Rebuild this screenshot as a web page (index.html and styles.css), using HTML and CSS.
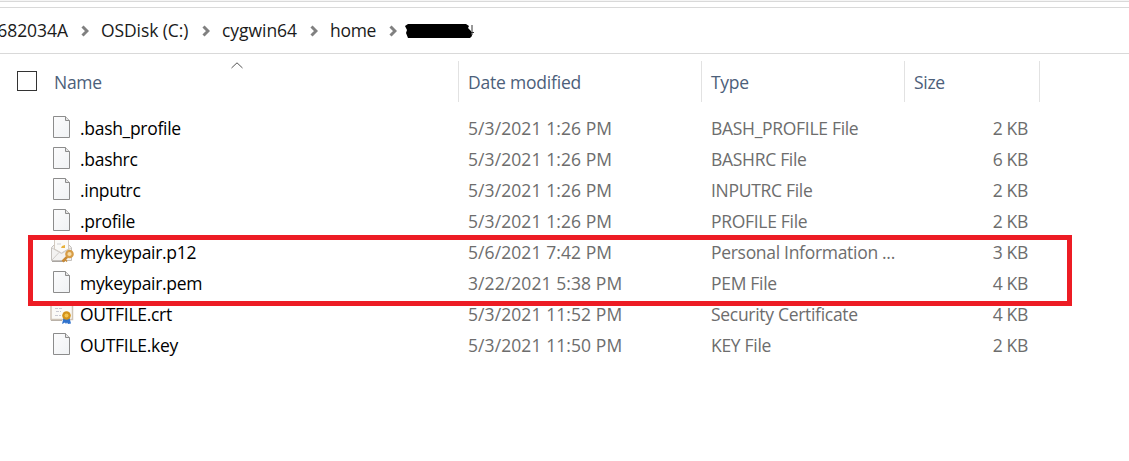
FILE: index.html
```html
<!DOCTYPE html>
<html lang="en">
<head>
  <meta charset="UTF-8">
  <title>home</title>
  <link rel="stylesheet" href="styles.css">
</head>
<body>
  <svg class="defs" width="0" height="0">
    <symbol id="chevron" viewBox="0 0 8 12">
      <path d="M1.5 1.5 L6 6 L1.5 10.5" fill="none" stroke="#808080" stroke-width="3"/>
    </symbol>
    <linearGradient id="paper" x1="0" y1="0" x2="1" y2="1">
      <stop offset="0" stop-color="#fcfcfd"/>
      <stop offset="1" stop-color="#f0f2f4"/>
    </linearGradient>
    <symbol id="file" viewBox="0 0 24 24">
      <path d="M3.5 1.5 H15.5 L19.5 5.5 V22.5 H3.5 Z" fill="url(#paper)" stroke="#8c8c8c"/>
      <path d="M15.5 1.5 V5.5 H19.5" fill="#e4e4e4" stroke="#8c8c8c"/>
    </symbol>
    <symbol id="pfx" viewBox="0 0 24 24">
      <path d="M1.5 8.5 L4 6 H19 L21.5 8.5 V21.5 H1.5 Z" fill="#f1f0ef" stroke="#c4c0bc"/>
      <path d="M4.5 0 H18.500 V10 L11.500 14 L4.500 10 Z" fill="#fbfaf8" stroke="#d3cac0"/>
      <path d="M7 5 H11" stroke="#cfcfd2"/>
      <path d="M11 9 L12 7 L15 6 V9 Z" fill="#e8b23c"/>
      <path d="M2 9 L11.500 14.500 L21 9 V21 H2 Z" fill="#f3f2f1"/>
      <path d="M2 9 L11.500 14.500 L21 9 M2 21 L9 13.500" fill="none" stroke="#cfcbc7"/>
      <path d="M2 22.500 H15" stroke="#aaa6a2"/>
      <path d="M18 17 L12.500 22.500" stroke="#c98a34" stroke-width="2.500"/>
      <path d="M14.500 20 l2.500 2.500" stroke="#c98a34" stroke-width="1.500"/>
      <circle cx="19.500" cy="15" r="3.200" fill="#f6dca8" stroke="#d79c45" stroke-width="2.200"/>
    </symbol>
    <symbol id="cert" viewBox="0 0 24 24">
      <rect x="1" y="2.500" width="21.500" height="16" fill="#fbfaf7" stroke="#cfc4b6" stroke-width="1.500"/>
      <path d="M5 7.500 H13 M6 10.500 H11 M5 14.500 H11" stroke="#c9c9d2" stroke-dasharray="3 1"/>
      <path d="M1 19.500 H12" stroke="#b9b1a8"/>
      <path d="M13.500 17 L12 23 L15 21.500 L16 23 L17 21.500 L18 23 L21 22.500 L19.500 17 Z" fill="#2f72cc"/>
      <circle cx="16.500" cy="14.500" r="4.300" fill="#d3921a"/>
      <circle cx="16.500" cy="14.500" r="2" fill="#f2c451"/>
    </symbol>
  </svg>

  <div class="toolbar-edge"></div>
  <nav class="address">
    <span class="crumb drive">682034A</span>
    <svg class="sep"><use href="#chevron"/></svg>
    <span class="crumb disk">OSDisk (C:)</span>
    <svg class="sep"><use href="#chevron"/></svg>
    <span class="crumb cygwin">cygwin64</span>
    <svg class="sep"><use href="#chevron"/></svg>
    <span class="crumb home">home</span>
    <svg class="sep"><use href="#chevron"/></svg>
    <svg class="redacted" viewBox="0 0 70 16">
      <path d="M68 2 V12 M66 9.500 H70" fill="none" stroke="#333"/>
      <path d="M1 3 L4 1 H62 L65 3 L64 5 L67 8 L68 13 L66 15 H4 L2 10 L3 7 Z"/>
    </svg>
  </nav>

  <div class="files">
    <div class="header">
      <div class="check"><span class="box"></span></div>
      <div class="col name">Name
        <svg class="sort" viewBox="0 0 12 7"><path d="M.5 6 L6 .8 L11.500 6" fill="none" stroke="#555"/></svg>
      </div>
      <div class="col date">Date modified</div>
      <div class="col type">Type</div>
      <div class="col size">Size</div>
    </div>

    <div class="row"><svg class="icon"><use href="#file"/></svg><span class="name">.bash_profile</span><span class="date">5/3/2021 1:26 PM</span><span class="type">BASH_PROFILE File</span><span class="size">2 KB</span></div>
    <div class="row"><svg class="icon"><use href="#file"/></svg><span class="name">.bashrc</span><span class="date">5/3/2021 1:26 PM</span><span class="type">BASHRC File</span><span class="size">6 KB</span></div>
    <div class="row"><svg class="icon"><use href="#file"/></svg><span class="name">.inputrc</span><span class="date">5/3/2021 1:26 PM</span><span class="type">INPUTRC File</span><span class="size">2 KB</span></div>
    <div class="row"><svg class="icon"><use href="#file"/></svg><span class="name">.profile</span><span class="date">5/3/2021 1:26 PM</span><span class="type">PROFILE File</span><span class="size">2 KB</span></div>
    <div class="row"><svg class="icon"><use href="#pfx"/></svg><span class="name">mykeypair.p12</span><span class="date">5/6/2021 7:42 PM</span><span class="type">Personal Information ...</span><span class="size">3 KB</span></div>
    <div class="row"><svg class="icon"><use href="#file"/></svg><span class="name">mykeypair.pem</span><span class="date">3/22/2021 5:38 PM</span><span class="type">PEM File</span><span class="size">4 KB</span></div>
    <div class="row"><svg class="icon"><use href="#cert"/></svg><span class="name">OUTFILE.crt</span><span class="date">5/3/2021 11:52 PM</span><span class="type">Security Certificate</span><span class="size">4 KB</span></div>
    <div class="row"><svg class="icon"><use href="#file"/></svg><span class="name">OUTFILE.key</span><span class="date">5/3/2021 11:50 PM</span><span class="type">KEY File</span><span class="size">2 KB</span></div>

    <div class="highlight"></div>
  </div>
</body>
</html>
```
FILE: styles.css
```css
* {
  box-sizing: border-box;
}

body {
  margin: 0;
  background: #fff;
  color: #000;
  font-family: "Open Sans", "Noto Sans", sans-serif;
  font-size: 17.5px;
  letter-spacing: -0.3px;
  overflow: hidden;
}

.defs {
  position: absolute;
}

.toolbar-edge {
  height: 2px;
  background: #f5f5f5;
  border-bottom: 1px solid #d9d9d9;
}

.address {
  display: flex;
  align-items: center;
  height: 47px;
  margin-top: 5px;
  border-top: 1px solid #d9d9d9;
  border-bottom: 1px solid #d9d9d9;
}

.crumb {
  flex: none;
  padding-bottom: 2px;
  line-height: 24px;
  color: #1a1a1a;
  white-space: nowrap;
}

.drive {
  display: flex;
  justify-content: flex-end;
  width: 68px;
  letter-spacing: -0.05px;
}

.disk {
  width: 88px;
  letter-spacing: -0.1px;
}

.cygwin {
  width: 75px;
  letter-spacing: -0.05px;
}

.home {
  width: 46px;
}

.sep {
  flex: none;
  width: 8px;
  height: 12px;
  margin: 1px 12px 0 13px;
}

.redacted {
  flex: none;
  width: 70px;
  height: 16px;
  margin-left: -5px;
}

.files {
  position: relative;
  padding-top: 7px;
}

.header {
  display: grid;
  grid-template-columns: 44px 415px 243px 203px 135px;
  grid-template-rows: 41px;
  margin-bottom: 11px;
  color: #4c607a;
  line-height: 43px;
}

.check {
  padding: 10px 0 0 17px;
}

.box {
  display: block;
  width: 20px;
  height: 20px;
  border: 1px solid #333;
}

.col {
  position: relative;
  padding-left: 9px;
  border-right: 1px solid #e2e2e2;
}

.header .name {
  padding-left: 10px;
}

.header .date {
  letter-spacing: -0.2px;
}

.sort {
  position: absolute;
  top: 1px;
  left: 187px;
  width: 12px;
  height: 7px;
}

.row {
  display: grid;
  grid-template-columns: 30px 388px 243px 203px 114px;
  height: 31px;
  padding-left: 50px;
  color: #6d6d6d;
  line-height: 31px;
  white-space: nowrap;
}

.row .name {
  color: #000;
}

.row .date {
  letter-spacing: 0.08px;
}

.row .size {
  text-align: right;
}

.icon {
  width: 24px;
  height: 24px;
  margin-top: 2px;
}

.highlight {
  position: absolute;
  top: 181px;
  left: 28px;
  width: 1044px;
  height: 71px;
  border: 5px solid #ed1c24;
}
```
